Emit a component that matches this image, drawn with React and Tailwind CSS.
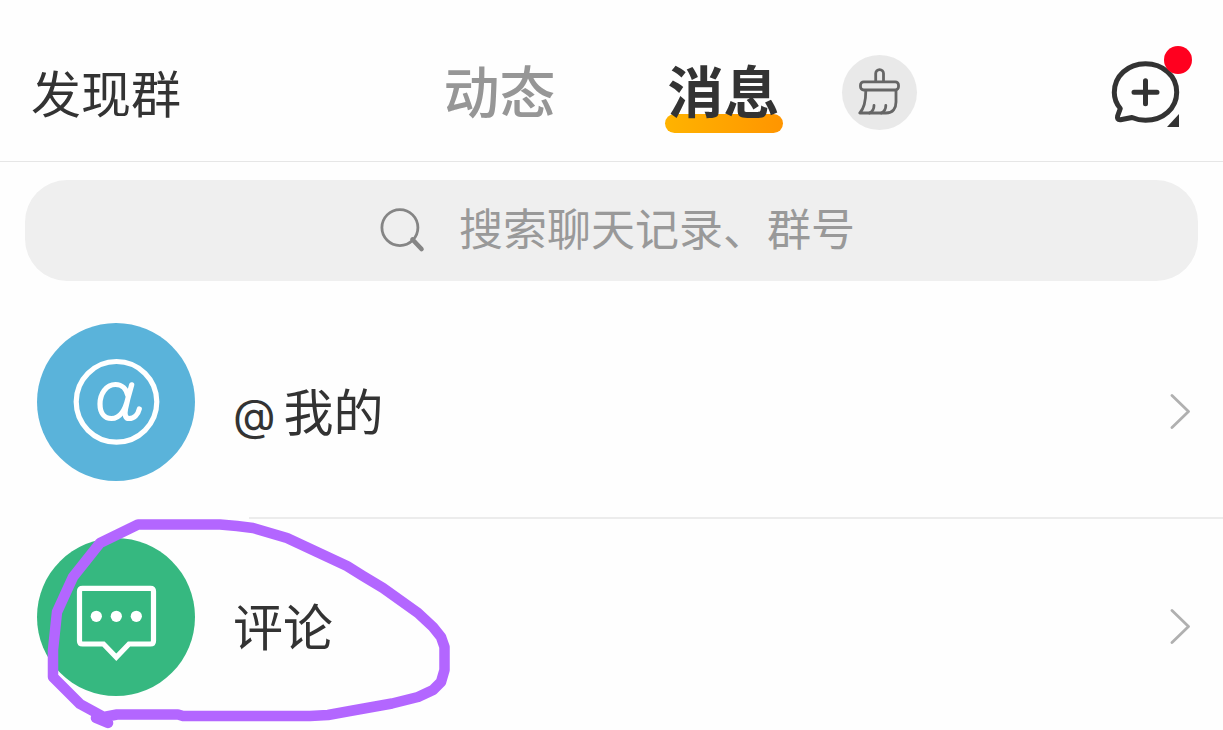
function BrushIcon() {
    return (
        <svg className="w-[42px] h-[50px]" viewBox="858 67 42 50" fill="none" stroke="#666" strokeWidth="2.8" strokeLinecap="round" strokeLinejoin="round" aria-hidden="true">
            <path d="M875.7 80.5V72.5a3.8 3.8 0 0 1 7.8 0V80.5" />
            <rect x="860.5" y="80.8" width="38" height="8.2" rx="3.2" />
            <path d="M865.8 89.5C865.8 99 865 106.5 859.8 112H886C893 112 896 107 896 101V89.5" />
            <path d="M874 104.5C874 108 872.5 110.5 869.5 112M885.8 104.5C885.8 108 884.3 110.5 881.3 112" />
        </svg>
    );
}

function NewChatIcon() {
    return (
        <svg className="w-[72px] h-[73px]" viewBox="1110 56 72 73" fill="none" stroke="#333" strokeWidth="5" strokeLinecap="round" strokeLinejoin="round" aria-hidden="true">
            <path d="M1120.3 108.5C1116.5 104 1114.3 98.5 1114.3 92.5C1114.3 76 1128 63.8 1145.5 63.8S1176.7 76 1176.7 92.2S1163 120.2 1145.5 120.2C1140.5 120.2 1136 119.2 1132 117.5L1120.5 119.8C1117.8 120 1117 118.5 1117.6 116Z" />
            <path d="M1134 92.2H1157M1145.5 80.7V103.7" />
            <path d="M1179 114V127H1167Z" fill="#333" stroke="none" />
        </svg>
    );
}

function SearchIcon() {
    return (
        <svg className="w-[45px] h-[46px] shrink-0" viewBox="380 206 45 46" fill="none" stroke="#858585" strokeLinecap="round" aria-hidden="true">
            <circle cx="399.9" cy="225.6" r="18" strokeWidth="2.8" />
            <path d="M412.5 237.5L421.5 247" strokeWidth="4.6" />
        </svg>
    );
}

function MentionIcon() {
    return (
        <svg className="size-full" viewBox="0 0 158 158" fill="none" stroke="#fff" strokeLinecap="round" strokeLinejoin="round" aria-hidden="true">
            <circle cx="79.5" cy="78.8" r="40.3" strokeWidth="5.2" />
            <path d="M91 73C89.5 66 85 61.5 78.5 61.5C69 61.5 63 71 63 81C63 90 67.5 95.5 74.5 95.5C83 95.5 88.5 86 91 75L94.7 61.8M91 75L88.5 86C87.3 92 88.5 95.5 92 95.5C97 95.5 101 91.5 102.3 86" strokeWidth="5.2" />
        </svg>
    );
}

function CommentIcon() {
    return (
        <svg className="size-full" viewBox="0 0 158 158" fill="none" aria-hidden="true">
            <path d="M45.5 50.3H113.5Q116.5 50.3 116.5 53.3V103Q116.5 106 113.5 106H92L79.3 119.3L66.5 106H45.5Q42.5 106 42.5 103V53.3Q42.5 50.3 45.5 50.3Z" stroke="#fff" strokeWidth="5.2" />
            <g fill="#fff">
                <circle cx="59.3" cy="78.3" r="5.6" />
                <circle cx="79.3" cy="78.3" r="5.6" />
                <circle cx="99.3" cy="78.3" r="5.6" />
            </g>
        </svg>
    );
}

function Chevron() {
    return (
        <svg className="w-[20px] h-[36px]" viewBox="0 0 20 36" fill="none" stroke="#b0b0b0" strokeWidth="2.8" strokeLinecap="round" strokeLinejoin="round" aria-hidden="true">
            <path d="M2 2.5L18.5 18.5L2 34.5" />
        </svg>
    );
}

function Row({ label, color, icon, divider }) {
    return (
        <li>
            <a href="#" className="flex h-[213px] items-center pl-[37px] pr-[33px]">
                <span className={`mb-[18px] size-[158px] shrink-0 rounded-full ${color}`}>{icon}</span>
                <span className="ml-[38px] flex-1 pb-1 text-[50px] leading-[60px]">{label}</span>
                <Chevron />
            </a>
            {divider && <hr className="ml-[249px] h-[2px] border-0 bg-[#ececec]" />}
        </li>
    );
}

// Freehand pen mark around the comments row
function PenMark() {
    return (
        <svg className="pointer-events-none absolute left-[40px] top-[510px] h-[220px] w-[420px]" viewBox="40 510 420 220" fill="none" stroke="#b366ff" strokeWidth="10.5" strokeLinecap="round" strokeLinejoin="round" aria-hidden="true">
            <path d="M96 718L108 723L104 717L117 714.5H178L183 716H310L328 715L350 711L392 703.5L418 697L433 690L441 682L444.5 670V647L441 637L433 627L418 613L383 588L363 576L347 566L317 552L287 538L253 528L237 526L220 524.5H138L100 543L73 577L57 612L53 650V677L66 690L80 704L102 716" />
        </svg>
    );
}

export default function App() {
    return (
        <main className="relative h-screen overflow-hidden bg-[#fefefe] font-['Noto_Sans_CJK_SC',sans-serif] text-[#333]">
            <header className="grid h-[162px] grid-cols-[1fr_auto_1fr] items-center border-b border-[#e6e6e6] px-[31px] pt-6">
                <a href="#" className="pb-1 text-[50px] leading-[60px]">发现群</a>

                <nav className="flex gap-[112px] pb-2 text-[56px] leading-[60px]">
                    <a href="#" className="font-medium text-[#969696]">动态</a>
                    <a href="#" aria-current="page" className="relative isolate font-bold">
                        消息
                        <span className="absolute -inset-x-[3px] -bottom-[14px] -z-10 h-[19px] rounded-full bg-linear-to-r from-[#ffb300] to-[#ff9500]" />
                    </a>
                </nav>

                <div className="flex items-center justify-between pl-[62px]">
                    <button type="button" aria-label="清除未读" className="flex size-[75px] items-center justify-center rounded-full bg-[#e9e9e9]">
                        <BrushIcon />
                    </button>
                    <button type="button" aria-label="添加" className="relative pr-[10px]">
                        <NewChatIcon />
                        <span className="absolute right-0 -top-[10px] size-[28px] rounded-full bg-[#ff001f]" />
                    </button>
                </div>
            </header>

            <label className="mx-[25px] mt-[18px] flex h-[101px] items-center justify-center gap-[34px] rounded-[42px] bg-[#efefef] pl-3">
                <SearchIcon />
                <input
                    type="text"
                    aria-label="搜索"
                    placeholder="搜索聊天记录、群号"
                    className="w-[9em] bg-transparent pb-2 text-[44px] leading-[60px] outline-none placeholder:text-[#999]"
                />
            </label>

            <ul className="mt-[23px]">
                <Row
                    label={<><span className="mr-2 font-['Inter',sans-serif] text-[44px] leading-none">@</span>我的</>}
                    color="bg-[#5ab3da]"
                    icon={<MentionIcon />}
                    divider
                />
                <Row label="评论" color="bg-[#36b880]" icon={<CommentIcon />} />
            </ul>

            <PenMark />
        </main>
    );
}
